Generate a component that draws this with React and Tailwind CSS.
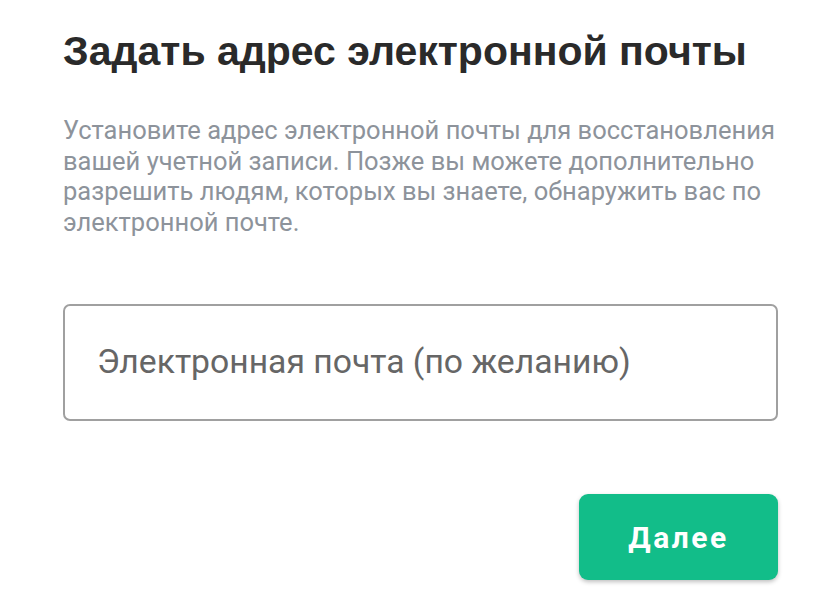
export default function App() {
  return (
    <div className="w-[840px] h-[611px] bg-white overflow-hidden" style={{ fontFamily: "Roboto, 'Noto Sans', sans-serif" }}>
      <div className="pl-[63px] pr-[62px] pt-[27px] flex flex-col">
        <h1 className="text-[41px] leading-[48px] font-bold text-[#2a2a2a] whitespace-nowrap" style={{ fontFamily: "'Liberation Sans', Arial, sans-serif" }}>
          Задать адрес электронной почты
        </h1>
        <p className="mt-[40px] text-[25.5px] leading-[30.5px] text-[#8d939b]">
          Установите адрес электронной почты для восстановления вашей учетной записи. Позже вы можете дополнительно разрешить людям, которых вы знаете, обнаружить вас по электронной почте.
        </p>
        <div className="mt-[67px] h-[117px] border-2 border-[#a0a0a0] rounded-[7px] flex items-center pl-[32px]">
          <span className="text-[33.7px] text-[#666666]">Электронная почта (по желанию)</span>
        </div>
        <div className="mt-[73px] flex justify-end">
          <button className="w-[199px] h-[86px] rounded-[9px] bg-[#12bd89] text-white text-[30px] font-bold tracking-[2.5px] shadow-[0_2px_4px_rgba(0,0,0,0.25)]">
            Далее
          </button>
        </div>
      </div>
    </div>
  );
}
